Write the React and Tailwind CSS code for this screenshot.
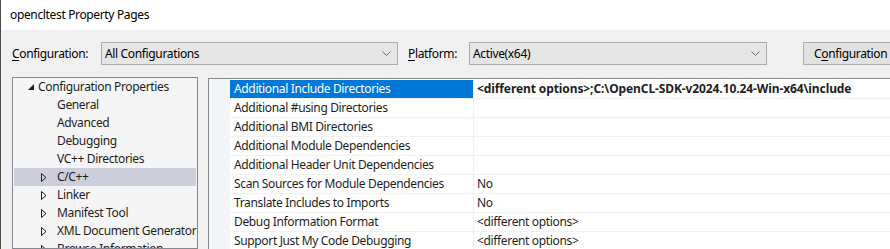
import React from "react";

const Chevron = () => (
  <svg width="9" height="6" viewBox="0 0 9 6" className="shrink-0">
    <path d="M0.5 0.5 L4.5 4.5 L8.5 0.5" fill="none" stroke="#6d6d6d" strokeWidth="1" />
  </svg>
);

const Expander = () => (
  <svg width="6" height="9" viewBox="0 0 6 9" className="shrink-0">
    <path d="M0.5 0.5 L5 4.5 L0.5 8.5 Z" fill="none" stroke="#1e1e1e" strokeWidth="1" />
  </svg>
);

const Expanded = () => (
  <svg width="6" height="6" viewBox="0 0 6 6" className="shrink-0">
    <path d="M6 0 L6 6 L0 6 Z" fill="#1e1e1e" />
  </svg>
);

const treeItems = [
  { label: "General", level: 1 },
  { label: "Advanced", level: 1 },
  { label: "Debugging", level: 1 },
  { label: "VC++ Directories", level: 1 },
  { label: "C/C++", level: 1, exp: true, sel: true },
  { label: "Linker", level: 1, exp: true },
  { label: "Manifest Tool", level: 1, exp: true },
  { label: "XML Document Generator", level: 1, exp: true },
  { label: "Browse Information", level: 1, exp: true },
];

const rows = [
  ["Additional Include Directories", "<different options>;C:\\OpenCL-SDK-v2024.10.24-Win-x64\\include", true],
  ["Additional #using Directories", ""],
  ["Additional BMI Directories", ""],
  ["Additional Module Dependencies", ""],
  ["Additional Header Unit Dependencies", ""],
  ["Scan Sources for Module Dependencies", "No"],
  ["Translate Includes to Imports", "No"],
  ["Debug Information Format", "<different options>"],
  ["Support Just My Code Debugging", "<different options>"],
  ["", ""],
];

export default function App() {
  return (
    <div
      className="w-[890px] h-[249px] overflow-hidden bg-[#f0f0f0] border-l border-[#4a4a4a] text-[12px] tracking-[-0.35px] text-[#1e1e1e] flex flex-col"
      style={{ fontFamily: '"Noto Sans", "Open Sans", sans-serif' }}
    >
      <div className="h-[30px] shrink-0 bg-white flex items-center pl-[9px] text-[12px] text-black">
        opencltest Property Pages
      </div>

      <div className="flex items-center pl-[11px] pt-[12px] h-[35px] shrink-0">
        <div className="w-[89px] shrink-0 text-black">
          <span className="underline underline-offset-2">C</span>onfiguration:
        </div>
        <div className="w-[297px] h-[23px] shrink-0 bg-[#e5e5e5] border border-[#acacac] flex items-center pl-[3px] pr-[6px] justify-between text-black">
          <span>All Configurations</span>
          <Chevron />
        </div>
        <div className="w-[61px] shrink-0 pl-[10px] box-content text-black">
          <span className="underline underline-offset-2">P</span>latform:
        </div>
        <div className="w-[298px] h-[23px] shrink-0 bg-[#e5e5e5] border border-[#acacac] flex items-center pl-[3px] pr-[6px] justify-between text-black">
          <span>Active(x64)</span>
          <Chevron />
        </div>
        <div className="ml-[36px] w-[130px] h-[23px] shrink-0 bg-[#e1e1e1] border border-[#adadad] flex items-center pl-[10px] whitespace-nowrap text-black">
          C<span className="underline underline-offset-2">o</span>nfiguration Manager...
        </div>
      </div>

      <div className="flex pl-[11px] pt-[12px] flex-1 min-h-0">
        <div className="w-[186px] shrink-0 border border-[#828790] bg-[#f5f5f5] pt-0 px-[1px] overflow-hidden">
          <div className="h-[18px] flex items-center whitespace-nowrap">
            <div className="w-[24px] flex justify-end pr-[4px] box-border shrink-0"><Expanded /></div>
            <span>Configuration Properties</span>
          </div>
          {treeItems.map((it) => (
            <div
              key={it.label}
              className={`h-[18px] flex items-center whitespace-nowrap ${it.sel ? "bg-[#cccedb]" : ""}`}
            >
              <div className="w-[43px] shrink-0 flex justify-end pr-[10px] box-border">
                {it.exp ? <Expander /> : null}
              </div>
              <span>{it.label}</span>
            </div>
          ))}
        </div>

        <div className="ml-[10px] mt-[1px] flex-1 border-t border-l border-[#828790] bg-white flex overflow-hidden">
          <div className="w-[21px] shrink-0 bg-[#f3f5f9]" />
          <div className="flex-1 pt-[1px]">
            {rows.map(([name, value, sel], i) => (
              <div key={i} className="flex h-[19px] border-b border-[#f0f0f0]">
                <div
                  className={`w-[244px] shrink-0 flex items-center pl-[4px] whitespace-nowrap border-r border-[#f0f0f0] ${
                    sel ? "bg-[#0078d7] text-white" : ""
                  }`}
                >
                  {name}
                </div>
                <div
                  className={`flex-1 flex items-center pl-[3px] whitespace-nowrap ${
                    sel ? "font-bold tracking-[-0.1px]" : ""
                  }`}
                >
                  {value}
                </div>
              </div>
            ))}
          </div>
        </div>
      </div>
    </div>
  );
}
